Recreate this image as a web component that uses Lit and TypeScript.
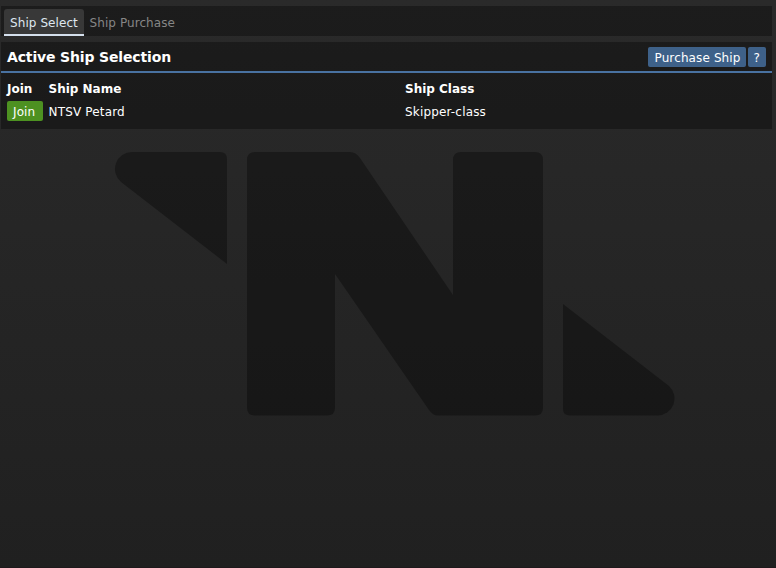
import { LitElement, html, css } from "lit";
import { customElement } from "lit/decorators.js";

@customElement("app-root")
export class AppRoot extends LitElement {
  static styles = css`
    :host {
      display: block;
      position: relative;
      box-sizing: border-box;
      height: 568px;
      padding: 6px 4px 0 1px;
      overflow: hidden;
      background: linear-gradient(to bottom, #2a2a2a, #202020);
      color: #fff;
      font: 12px/20px Verdana, "DejaVu Sans", sans-serif;
    }
    .logo {
      position: absolute;
      left: 0;
      top: 0;
      fill: #000;
      opacity: 0.33;
    }
    .edge {
      position: absolute;
      left: 0;
      right: 0;
      bottom: 0;
      height: 1px;
      background: #1f191c;
    }
    .tabs, .section { position: relative; background: rgba(0, 0, 0, 0.33); }
    .tabs {
      display: flex;
      box-sizing: border-box;
      height: 30px;
      padding: 3px 3px 0;
    }
    .tab {
      box-sizing: border-box;
      height: 27px;
      padding: 4px 0 0 5.5px;
      color: #868686;
      letter-spacing: 0.08px;
      white-space: nowrap;
    }
    .selected {
      width: 80px;
      padding-left: 6px;
      background: #383838;
      border-bottom: 2px solid #d4dfec;
      border-radius: 3px 3px 0 0;
      color: #dfe7f0;
    }
    .section { height: 87px; margin-top: 6px; }
    .header {
      display: flex;
      box-sizing: border-box;
      height: 31px;
      padding: 5px 6px 0;
      gap: 2px;
      border-bottom: 2px solid #4972a1;
    }
    .title {
      flex: 1;
      font-size: 14px;
      font-weight: bold;
      letter-spacing: -0.15px;
    }
    .button {
      box-sizing: border-box;
      height: 20px;
      padding-left: 6px;
      border-radius: 2px;
      background: #3e6189;
      line-height: 22px;
      letter-spacing: 0.12px;
      white-space: nowrap;
    }
    .purchase { width: 97.5px; padding-left: 6.5px; }
    .help { width: 18.5px; }
    .join { width: 36px; background: #4d9121; }
    .grid {
      display: grid;
      grid-template-columns: 41.5px 356.5px 1fr;
      grid-template-rows: 20px 20px;
      row-gap: 3px;
      padding: 5px 6px 0;
      line-height: 22px;
    }
    .head { font-weight: bold; }
    .cell { letter-spacing: 0.17px; }
  `;

  render() {
    return html`
      <svg class="logo" width="776" height="568" viewBox="0 0 776 568">
        <path d="M132 152H220Q227 152 227 159V264L121 182A17 17 0 0 1 132 152Z" />
        <path d="M255 152H350Q356 152 360 158L453 295V160Q453 152 461 152H535Q543 152 543 160V408Q543 415.5 535 415.5H438Q433 415.5 429 410L335 274V408Q335 415.5 327 415.5H255Q247 415.5 247 408V160Q247 152 255 152Z" />
        <path d="M563 304L669 386A17 17 0 0 1 658 415.5H570Q563 415.5 563 409Z" />
      </svg>
      <nav class="tabs">
        <div class="tab selected"><span>Ship Select</span></div>
        <div class="tab"><span>Ship Purchase</span></div>
      </nav>
      <section class="section">
        <div class="header">
          <div class="title"><span>Active Ship Selection</span></div>
          <div class="button purchase"><span>Purchase Ship</span></div>
          <div class="button help"><span>?</span></div>
        </div>
        <div class="grid">
          <div class="head">Join</div>
          <div class="head">Ship Name</div>
          <div class="head">Ship Class</div>
          <div class="button join">Join</div>
          <div class="cell">NTSV Petard</div>
          <div class="cell">Skipper-class</div>
        </div>
      </section>
      <div class="edge"></div>
    `;
  }
}
